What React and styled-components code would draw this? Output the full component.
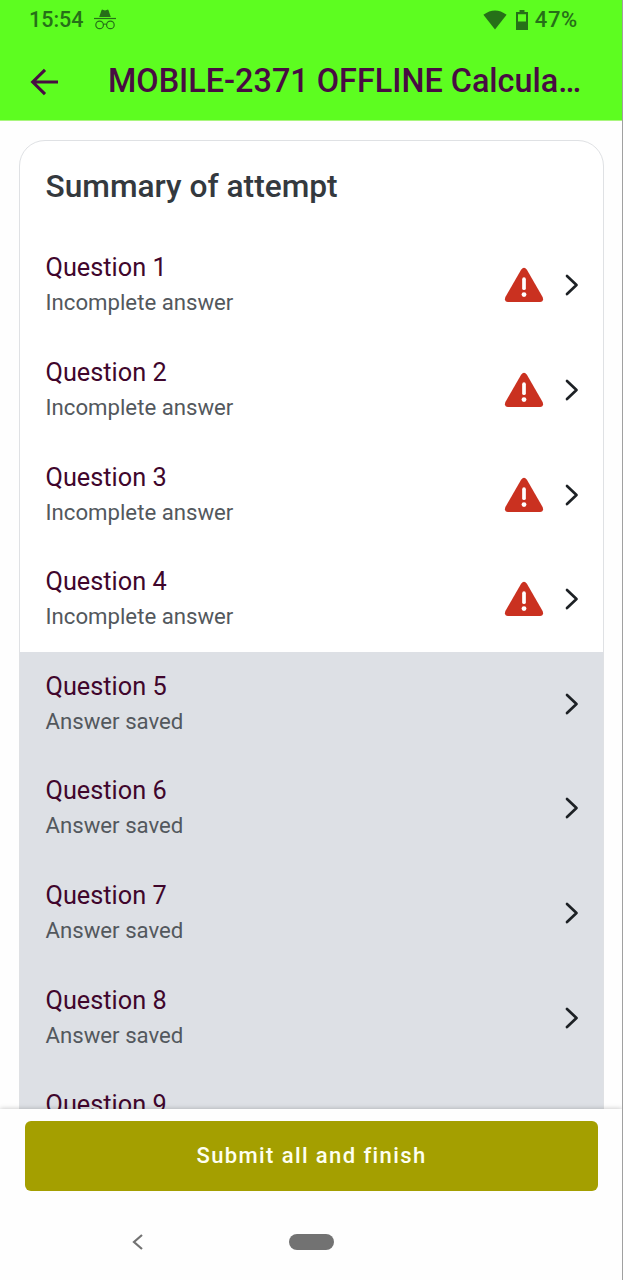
import styled, { createGlobalStyle } from "styled-components";

const GlobalStyle = createGlobalStyle`
  body {
    margin: 0;
    font-family: Roboto, "Liberation Sans", sans-serif;
    background: #fff;
  }
`;

const Screen = styled.div`
  box-sizing: border-box;
  display: flex;
  flex-direction: column;
  width: 623px;
  height: 1280px;
  overflow: hidden;
  background: #fefefe;
  border-right: 1px solid #a0a0a0;
`;

const TopArea = styled.header`
  flex: none;
  box-sizing: border-box;
  height: 121px;
  margin-right: -1px;
  background: #5dfd20;
  border-right: 1px solid #4ac21d;
  border-bottom: 1px solid #a9f67e;
`;

const StatusBar = styled.div`
  display: flex;
  align-items: center;
  height: 40px;
  padding: 0 44px 0 29px;
  color: #267018;
  font-size: 21.5px;
  font-weight: 500;
  line-height: 38px;
`;

const Clock = styled.span`
  width: 65px;
  margin-bottom: 1px;
`;

const StatusRight = styled.div`
  display: flex;
  align-items: center;
  margin-left: auto;
`;

const Battery = styled.span`
  margin: 0 0 1px 7px;
  font-size: 22px;
  letter-spacing: 0.7px;
`;

const Toolbar = styled.div`
  display: flex;
  align-items: center;
  height: 80px;
  padding: 4px 39px 0 28px;
  box-sizing: border-box;
`;

const BackButton = styled.button`
  display: flex;
  width: 80px;
  padding: 0;
  border: none;
  background: none;
`;

const Title = styled.h1`
  flex: 1;
  min-width: 0;
  margin: 0 0 2px;
  overflow: hidden;
  color: #480c42;
  font-size: 32.4px;
  font-weight: 500;
  line-height: 44px;
  text-overflow: ellipsis;
  white-space: nowrap;
`;

const Content = styled.main`
  flex: 1;
  min-height: 0;
  overflow: hidden;
  padding: 19px 19px 0;
`;

const Card = styled.section`
  box-sizing: border-box;
  width: 585px;
  overflow: hidden;
  background: #fff;
  border: 1px solid #dfe1e4;
  border-radius: 26px;
`;

const CardTitle = styled.h2`
  height: 92.6px;
  margin: 0;
  padding-left: 25.5px;
  color: #34393e;
  font-size: 31.7px;
  font-weight: 500;
  line-height: 91px;
`;

const Row = styled.div`
  box-sizing: border-box;
  display: flex;
  align-items: center;
  height: 104.6px;
  padding: 0 23px 0 25.5px;
  background: ${(props) => (props.$saved ? "#dde0e5" : "#fff")};
`;

const RowLabel = styled.div`
  flex: 1;
`;

const RowTitle = styled.h3`
  margin: 0;
  color: #40062c;
  font-size: 25.3px;
  font-weight: 400;
  line-height: 34px;
`;

const RowState = styled.p`
  margin: 0 0 1px;
  color: #53585d;
  font-size: 22.2px;
  line-height: 34px;
`;

const Footer = styled.footer`
  position: relative;
  flex: none;
  box-sizing: border-box;
  height: 171px;
  padding: 12px 24px 0 25px;
  background: #fefefe;
  box-shadow: 0 0 5px rgba(0, 0, 0, 0.25);
`;

const SubmitButton = styled.button`
  display: block;
  width: 573px;
  height: 70px;
  padding: 0 0 2px;
  color: #fefff0;
  background: #a49f00;
  border: none;
  border-radius: 6px;
  font-family: inherit;
  font-size: 22px;
  font-weight: 500;
  letter-spacing: 1.4px;
`;

const NavBar = styled.nav`
  display: flex;
  align-items: center;
  height: 102px;
  padding-left: 107px;
`;

const HomePill = styled.div`
  width: 45px;
  height: 16px;
  margin-left: 145px;
  background: #727272;
  border-radius: 8px;
`;

const questions = [
  { number: 1, state: "Incomplete answer" },
  { number: 2, state: "Incomplete answer" },
  { number: 3, state: "Incomplete answer" },
  { number: 4, state: "Incomplete answer" },
  { number: 5, state: "Answer saved", saved: true },
  { number: 6, state: "Answer saved", saved: true },
  { number: 7, state: "Answer saved", saved: true },
  { number: 8, state: "Answer saved", saved: true },
  { number: 9, state: "Answer saved", saved: true },
];

function IncognitoIcon() {
  return (
    <svg width="22" height="22" viewBox="0 0 22 22" fill="none">
      <path d="M5.2 8 7.5 1.2Q7.8.4 8.6.7L11 1.4 13.4.7Q14.2.4 14.5 1.2L16.8 8Z" fill="currentColor" />
      <path d="M0 9.5H22" stroke="currentColor" strokeWidth="1.2" />
      <circle cx="5.6" cy="15.9" r="3.8" stroke="currentColor" strokeWidth="1.2" />
      <circle cx="16.4" cy="15.9" r="3.8" stroke="currentColor" strokeWidth="1.2" />
      <path d="M9.3 15.5Q11 14.5 12.7 15.5" stroke="currentColor" strokeWidth="1.2" />
    </svg>
  );
}

function WifiIcon() {
  return (
    <svg width="24" height="20" viewBox="0 0 24 20">
      <path d="M0.4 4.8Q12-3.8 23.6 4.8L12 19.4Z" fill="currentColor" />
    </svg>
  );
}

const BatterySvg = styled.svg`
  width: 12px;
  height: 20px;
  margin-left: 9px;
`;

function BatteryIcon() {
  return (
    <BatterySvg viewBox="0 0 12 20">
      <path
        d="M3.5 0H8.5V2H12V20H0V2H3.5ZM2 4.2V11.4H10V4.2Z"
        fill="currentColor"
        fillRule="evenodd"
      />
    </BatterySvg>
  );
}

function BackArrow() {
  return (
    <svg width="32" height="32" viewBox="0 0 32 32" fill="none" stroke="#480c42" strokeWidth="3.1">
      <path d="M30 16H5M17 3.8 4.7 16 17 28.2" />
    </svg>
  );
}

const WarningSvg = styled.svg`
  width: 40px;
  height: 36px;
  margin-bottom: 1px;
`;

function WarningIcon() {
  return (
    <WarningSvg viewBox="0 0 40 36">
      <path
        d="M17.1 2.8Q20-1.2 22.9 2.8L38.6 30Q40.3 34.6 36 35H4Q-.3 34.6 1.4 30Z"
        fill="#ca3120"
      />
      <path d="M20 12.2V21.2" stroke="#fff" strokeWidth="3.7" strokeLinecap="round" />
      <circle cx="20" cy="27.6" r="2.4" fill="#fff" />
    </WarningSvg>
  );
}

const Chevron = styled.svg`
  width: 16px;
  height: 24px;
  margin: 0 0 1px 20px;
  fill: none;
  stroke: #1d2125;
  stroke-width: 2.7;
`;

function QuestionRow({ question }) {
  return (
    <Row $saved={question.saved}>
      <RowLabel>
        <RowTitle>Question {question.number}</RowTitle>
        <RowState>{question.state}</RowState>
      </RowLabel>
      {!question.saved && <WarningIcon />}
      <Chevron viewBox="0 0 16 24">
        <path d="M3 3 12.5 12 3 21" strokeLinecap="round" strokeLinejoin="round" />
      </Chevron>
    </Row>
  );
}

export default function App() {
  return (
    <>
      <GlobalStyle />
      <Screen>
        <TopArea>
          <StatusBar>
            <Clock>15:54</Clock>
            <IncognitoIcon />
            <StatusRight>
              <WifiIcon />
              <BatteryIcon />
              <Battery>47%</Battery>
            </StatusRight>
          </StatusBar>
          <Toolbar>
            <BackButton aria-label="Back">
              <BackArrow />
            </BackButton>
            <Title>MOBILE-2371 OFFLINE Calculated questions</Title>
          </Toolbar>
        </TopArea>
        <Content>
          <Card>
            <CardTitle>Summary of attempt</CardTitle>
            {questions.map((question) => (
              <QuestionRow key={question.number} question={question} />
            ))}
          </Card>
        </Content>
        <Footer>
          <SubmitButton>Submit all and finish</SubmitButton>
          <NavBar>
            <svg width="12" height="18" viewBox="0 0 12 18" fill="none" stroke="#727272" strokeWidth="2.2">
              <path d="M10 2 2 9 10 16" />
            </svg>
            <HomePill />
          </NavBar>
        </Footer>
      </Screen>
    </>
  );
}
